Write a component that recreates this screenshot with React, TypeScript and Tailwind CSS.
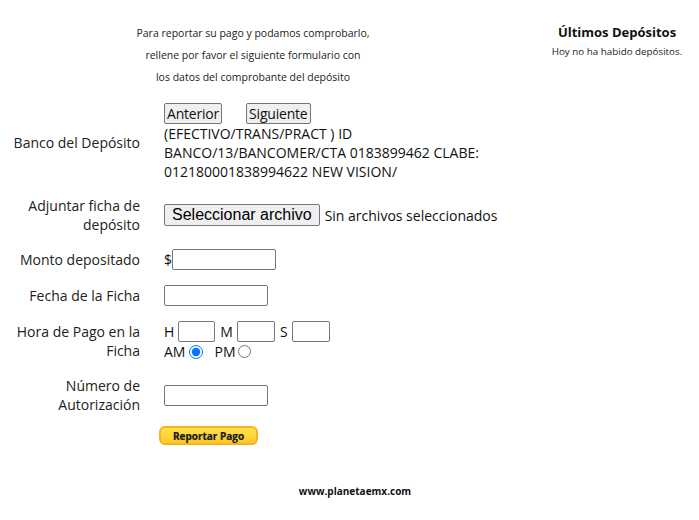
import React from 'react';

const font = { fontFamily: '"Open Sans", "Noto Sans", sans-serif' };

const TextBox = ({ className = 'w-[104px]' }: { className?: string }) => (
  <input type="text" className={`${className} h-[21px] border border-[#767676] rounded-[2px] bg-white outline-none`} />
);

const Label = ({ children }: { children: React.ReactNode }) => (
  <div className="text-right text-[14px] leading-[19px] text-[#222]">{children}</div>
);

const App: React.FC = () => {
  return (
    <div className="w-[699px] h-[520px] bg-white text-[#111]" style={font}>
      <div className="flex">
        <div className="w-[535px]">
          <div className="w-[506px] pt-[22px] text-center text-[10.5px] leading-[22px] text-[#222]">
            <p>Para reportar su pago y podamos comprobarlo,</p>
            <p>rellene por favor el siguiente formulario con</p>
            <p>los datos del comprobante del depósito</p>
          </div>

          <div className="mt-[15px] grid grid-cols-[140px_1fr] gap-x-6 gap-y-[15px] items-center">
            <Label>Banco del Depósito</Label>
            <div className="text-[14px] leading-[19px]">
              <div className="flex gap-[24px]">
                <button className="h-[21px] px-[2px] border border-[#767676] rounded-[2px] bg-[#efefef] text-[14px] leading-[19px] tracking-[-0.2px]">Anterior</button>
                <button className="h-[21px] px-[2px] border border-[#767676] rounded-[2px] bg-[#efefef] text-[14px] leading-[19px] tracking-[-0.2px]">Siguiente</button>
              </div>
              <p>(EFECTIVO/TRANS/PRACT ) ID</p>
              <p>BANCO/13/BANCOMER/CTA 0183899462 CLABE:</p>
              <p>012180001838994622 NEW VISION/</p>
            </div>

            <Label>Adjuntar ficha de<br />depósito</Label>
            <div className="flex items-center gap-[5px]">
              <button
                className="h-[22px] px-[7px] border border-[#767676] rounded-[2px] bg-[#efefef] text-[16px] leading-[20px] text-black"
                style={{ fontFamily: '"Liberation Sans", Arial, sans-serif' }}
              >
                Seleccionar archivo
              </button>
              <span className="text-[14px]">Sin archivos seleccionados</span>
            </div>

            <Label>Monto depositado</Label>
            <div className="flex items-center text-[14px] leading-[19px]">
              <span>$</span>
              <TextBox />
            </div>

            <Label>Fecha de la Ficha</Label>
            <div className="flex">
              <TextBox />
            </div>

            <Label>Hora de Pago en la<br />Ficha</Label>
            <div className="text-[14px] leading-[19px]">
              <div className="flex items-center gap-[4px]">
                <span>H</span>
                <TextBox className="w-[37px]" />
                <span className="ml-[1px]">M</span>
                <TextBox className="w-[38px]" />
                <span className="ml-[1px]">S</span>
                <TextBox className="w-[38px]" />
              </div>
              <div className="flex items-center">
                <span>AM</span>
                <input type="radio" name="ampm" defaultChecked className="ml-[4px] w-[14px] h-[14px]" />
                <span className="ml-[11px]">PM</span>
                <input type="radio" name="ampm" className="ml-[3px] w-[13px] h-[13px]" />
              </div>
            </div>

            <Label>Número de<br />Autorización</Label>
            <div className="flex">
              <TextBox />
            </div>

            <div />
            <div className="flex -ml-[5px] -mt-[3px]">
              <button
                className="w-[99px] h-[19px] rounded-[6px] border-2 border-[#f7b21f] bg-gradient-to-b from-[#ffe24a] to-[#ffc926] text-[10px] font-bold leading-[14px] text-[#1a1a1a]"
                style={{ textShadow: '0 0 1px #9a8a00' }}
              >
                Reportar Pago
              </button>
            </div>
          </div>

          <p className="mt-[39px] ml-[255px] w-[200px] text-center text-[10px] leading-[14px] font-bold text-[#111]">www.planetaemx.com</p>
        </div>

        <div className="flex-1 pt-[23px] text-center">
          <h3 className="text-[13px] font-bold leading-[18px]">Últimos Depósitos</h3>
          <p className="mt-[3px] text-[9.8px] leading-[16px] text-[#222]">Hoy no ha habido depósitos.</p>
        </div>
      </div>
    </div>
  );
};

export default App;
